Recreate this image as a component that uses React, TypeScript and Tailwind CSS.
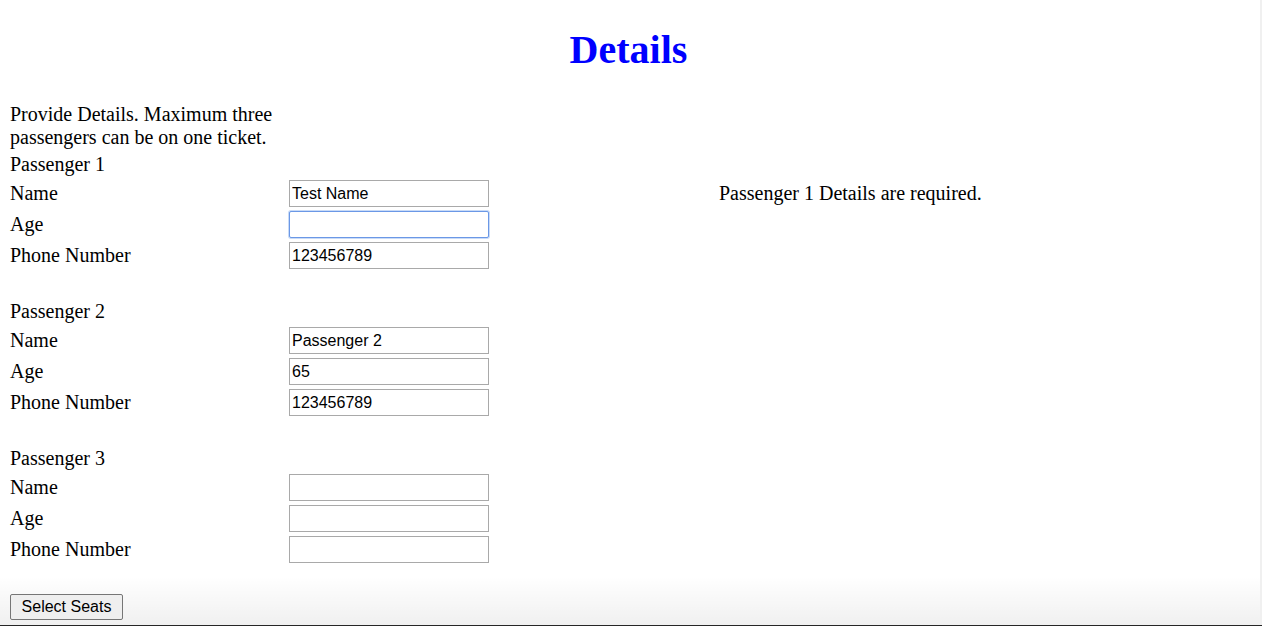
import React from "react";

function Field({ label, value, focused }: { label: string; value: string; focused?: boolean }) {
  return (
    <div className="flex h-[27px] items-center">
      <div className="w-[279px] leading-[23px]">{label}</div>
      <input
        readOnly
        value={value}
        className={
          "box-border h-[27px] w-[200px] bg-white px-[2px] font-['Liberation_Sans',Arial,sans-serif] text-[16px] leading-[18px] text-black outline-none " +
          (focused
            ? "rounded-[2px] border border-[#6b98e6] shadow-[0_0_0_1px_#c9dbf7]"
            : "border border-[#a9a9a9]")
        }
      />
    </div>
  );
}

function Blank() {
  return <div className="h-[23px]" />;
}

function Label({ text }: { text: string }) {
  return <div className="h-[23px] leading-[23px]">{text}</div>;
}

export default function App() {
  return (
    <div className="relative h-[626px] w-[1262px] overflow-hidden bg-white font-['Liberation_Serif','Times_New_Roman',serif] text-[20px] leading-[23px] text-black">
      <div className="pointer-events-none absolute bottom-0 left-0 h-[50px] w-full bg-gradient-to-b from-white/0 to-black/[0.06]" />
      <div className="pointer-events-none absolute right-0 top-0 h-full w-[2px] bg-[#f0f0f0]" />
      <div className="pointer-events-none absolute bottom-0 left-0 h-[1px] w-full bg-[#262626]" />
      <div className="relative">
        <h1 className="ml-[8px] w-[1241px] pt-[27px] text-center text-[40px] font-bold leading-[46px] text-[#0000ff]">
          Details
        </h1>
        <div className="ml-[10px] mt-[30px] flex flex-col gap-[4px]">
          <div className="w-[274px] leading-[23px]">
            Provide Details. Maximum three passengers can be on one ticket.
          </div>
          <Label text="Passenger 1" />
          <div className="flex items-center">
            <Field label="Name" value="Test Name" />
            <div className="ml-[230px] leading-[23px]">Passenger 1 Details are required.</div>
          </div>
          <Field label="Age" value="" focused />
          <Field label="Phone Number" value="123456789" />
          <Blank />
          <Label text="Passenger 2" />
          <Field label="Name" value="Passenger 2" />
          <Field label="Age" value="65" />
          <Field label="Phone Number" value="123456789" />
          <Blank />
          <Label text="Passenger 3" />
          <Field label="Name" value="" />
          <Field label="Age" value="" />
          <Field label="Phone Number" value="" />
          <Blank />
          <div>
            <button className="box-border h-[26px] w-[113px] rounded-[2px] border border-[#767676] bg-[#efefef] font-['Liberation_Sans',Arial,sans-serif] text-[16px] leading-[18px] text-black">
              Select Seats
            </button>
          </div>
        </div>
      </div>
    </div>
  );
}
